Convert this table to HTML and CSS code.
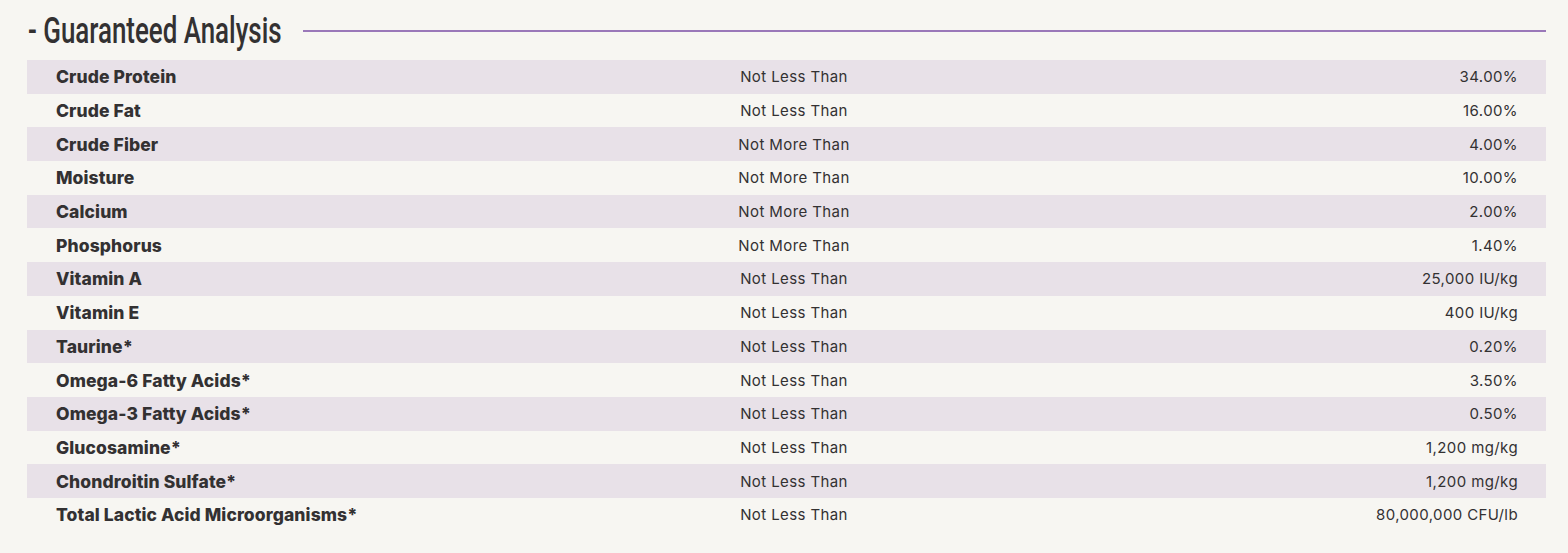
FILE: index.html
```html
<!DOCTYPE html>
<html>
<head>
<meta charset="utf-8">
<link rel="stylesheet" href="styles.css">
</head>
<body>
<section class="ga">
  <div class="ga-head">
    <div class="ga-title-box"><h2 class="ga-title">- Guaranteed Analysis</h2></div>
    <div class="ga-rule"></div>
  </div>
  <div class="ga-table">
    <div class="row"><span class="name">Crude Protein</span><span class="kind">Not Less Than</span><span class="val">34.00%</span></div>
    <div class="row"><span class="name">Crude Fat</span><span class="kind">Not Less Than</span><span class="val">16.00%</span></div>
    <div class="row"><span class="name">Crude Fiber</span><span class="kind">Not More Than</span><span class="val">4.00%</span></div>
    <div class="row"><span class="name">Moisture</span><span class="kind">Not More Than</span><span class="val">10.00%</span></div>
    <div class="row"><span class="name">Calcium</span><span class="kind">Not More Than</span><span class="val">2.00%</span></div>
    <div class="row"><span class="name">Phosphorus</span><span class="kind">Not More Than</span><span class="val">1.40%</span></div>
    <div class="row"><span class="name">Vitamin A</span><span class="kind">Not Less Than</span><span class="val">25,000 IU/kg</span></div>
    <div class="row"><span class="name">Vitamin E</span><span class="kind">Not Less Than</span><span class="val">400 IU/kg</span></div>
    <div class="row"><span class="name">Taurine*</span><span class="kind">Not Less Than</span><span class="val">0.20%</span></div>
    <div class="row"><span class="name">Omega-6 Fatty Acids*</span><span class="kind">Not Less Than</span><span class="val">3.50%</span></div>
    <div class="row"><span class="name">Omega-3 Fatty Acids*</span><span class="kind">Not Less Than</span><span class="val">0.50%</span></div>
    <div class="row"><span class="name">Glucosamine*</span><span class="kind">Not Less Than</span><span class="val">1,200 mg/kg</span></div>
    <div class="row"><span class="name">Chondroitin Sulfate*</span><span class="kind">Not Less Than</span><span class="val">1,200 mg/kg</span></div>
    <div class="row"><span class="name">Total Lactic Acid Microorganisms*</span><span class="kind">Not Less Than</span><span class="val">80,000,000 CFU/lb</span></div>
  </div>
</section>
</body>
</html>
```
FILE: styles.css
```css
html, body {
  margin: 0;
  padding: 0;
  background: #f7f6f2;
}
body {
  color: #333132;
}
.ga {
  padding: 12px 22px 0 27px;
}
.ga-head {
  display: flex;
  align-items: center;
  gap: 23px;
  height: 38px;
  margin-bottom: 10px;
}
.ga-title-box {
  width: 253px;
}
.ga-title {
  margin: 0 0 0 1px;
  font-family: Roboto, "DejaVu Sans Condensed", sans-serif;
  font-weight: 500;
  font-size: 37px;
  line-height: 38px;
  color: #333132;
  white-space: nowrap;
  transform-origin: left center;
  transform: scaleX(0.7);
}
.ga-rule {
  flex: 1;
  height: 2px;
  background: #9a78b9;
}
.ga-table {
  display: flex;
  flex-direction: column;
}
.row {
  display: grid;
  grid-template-columns: 500px 476px 1fr;
  align-items: center;
  height: 33.7px;
  padding: 0 28px 0 29px;
}
.row:nth-child(odd) {
  background: #e8e1e8;
}
.name {
  font-family: Inter, "Noto Sans", sans-serif;
  font-weight: 800;
  font-size: 17.5px;
  letter-spacing: 0.1px;
  color: #333132;
}
.kind {
  text-align: center;
  font-family: Inter, "Noto Sans", sans-serif;
  font-size: 15px;
  letter-spacing: 0.4px;
  color: #333132;
}
.val {
  text-align: right;
  font-family: Inter, "Noto Sans", sans-serif;
  font-size: 15px;
  letter-spacing: 0.4px;
  color: #333132;
}
```
